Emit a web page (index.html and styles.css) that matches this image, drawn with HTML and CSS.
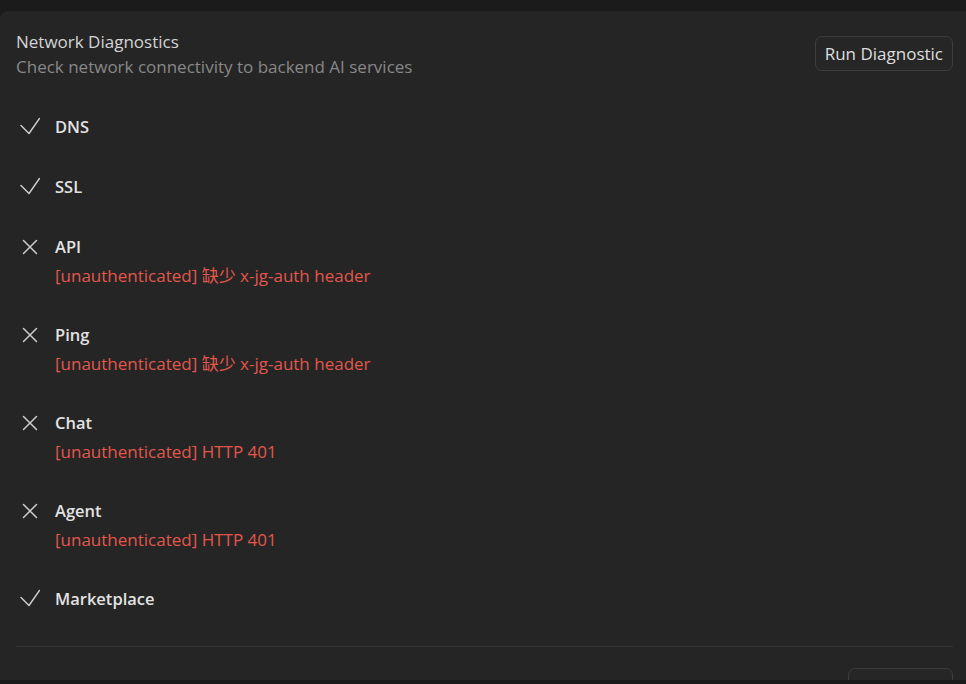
FILE: index.html
```html
<!DOCTYPE html>
<html lang="en">
<head>
<meta charset="utf-8">
<title>Network Diagnostics</title>
<link rel="stylesheet" href="styles.css">
</head>
<body>
<div class="panel">
  <header class="head">
    <div class="titles">
      <div class="title">Network Diagnostics</div>
      <div class="subtitle">Check network connectivity to backend AI services</div>
    </div>
    <button class="btn">Run Diagnostic</button>
  </header>
  <ul class="checks">
    <li class="check">
      <svg class="ico" viewBox="0 0 20 20"><path d="M1 8.5 L9 16.5 L19.5 1.5"/></svg>
      <div class="body"><div class="name">DNS</div></div>
    </li>
    <li class="check">
      <svg class="ico" viewBox="0 0 20 20"><path d="M1 8.5 L9 16.5 L19.5 1.5"/></svg>
      <div class="body"><div class="name">SSL</div></div>
    </li>
    <li class="check">
      <svg class="ico" viewBox="0 0 20 20"><path d="M3.5 3.5 L16.5 16.5 M16.5 3.5 L3.5 16.5"/></svg>
      <div class="body"><div class="name">API</div><div class="err">[unauthenticated] 缺少 x-jg-auth header</div></div>
    </li>
    <li class="check">
      <svg class="ico" viewBox="0 0 20 20"><path d="M3.5 3.5 L16.5 16.5 M16.5 3.5 L3.5 16.5"/></svg>
      <div class="body"><div class="name">Ping</div><div class="err">[unauthenticated] 缺少 x-jg-auth header</div></div>
    </li>
    <li class="check">
      <svg class="ico" viewBox="0 0 20 20"><path d="M3.5 3.5 L16.5 16.5 M16.5 3.5 L3.5 16.5"/></svg>
      <div class="body"><div class="name">Chat</div><div class="err">[unauthenticated] HTTP 401</div></div>
    </li>
    <li class="check">
      <svg class="ico" viewBox="0 0 20 20"><path d="M3.5 3.5 L16.5 16.5 M16.5 3.5 L3.5 16.5"/></svg>
      <div class="body"><div class="name">Agent</div><div class="err">[unauthenticated] HTTP 401</div></div>
    </li>
    <li class="check">
      <svg class="ico" viewBox="0 0 20 20"><path d="M1 8.5 L9 16.5 L19.5 1.5"/></svg>
      <div class="body"><div class="name">Marketplace</div></div>
    </li>
  </ul>
  <hr class="sep">
  <footer class="foot">
    <button class="btn">Copy Report</button>
  </footer>
</div>
<div class="strip"></div>
</body>
</html>
```

FILE: styles.css
```css
html, body {
  margin: 0;
  padding: 0;
  height: 684px;
  overflow: hidden;
  background: #1b1b1b;
}
body {
  font-family: "Segoe UI", "Open Sans", "Noto Sans CJK SC", sans-serif;
  font-size: 17px;
  color: #d6d6d6;
  padding-top: 11px;
  box-sizing: border-box;
}
.panel {
  background: #252525;
  height: 669px;
  border-radius: 8px 0 0 0;
  overflow: hidden;
  padding: 19px 13px 0 16px;
  box-sizing: border-box;
}
.strip {
  height: 4px;
  background: #1b1b1b;
}
.head {
  display: flex;
  justify-content: space-between;
  align-items: flex-start;
}
.title {
  line-height: 24px;
  color: #d4d4d4;
}
.subtitle {
  line-height: 26px;
  color: #888888;
}
.btn {
  font: inherit;
  color: #dedede;
  background: #262626;
  border: 1px solid #3d3d3d;
  border-radius: 7px;
  height: 35px;
  padding: 0 9px;
  margin-top: 6px;
  cursor: pointer;
}
.checks {
  list-style: none;
  margin: 35px 0 0;
  padding: 0;
  display: flex;
  flex-direction: column;
  gap: 36px;
}
.check {
  display: flex;
  gap: 15px;
  align-items: flex-start;
}
.ico {
  width: 20px;
  height: 20px;
  margin: 2px 0 0 4px;
  flex: none;
  fill: none;
  stroke: #cccccc;
  stroke-width: 1.5;
  stroke-linecap: round;
  stroke-linejoin: round;
}
.name {
  font-size: 16.5px;
  font-weight: 600;
  line-height: 24px;
  color: #e2e2e2;
}
.err {
  margin-top: 5px;
  line-height: 23px;
  height: 23px;
  color: #e2574c;
}
.sep {
  border: 0;
  border-top: 1px solid #343434;
  margin: 35px 0 0;
}
.foot {
  display: flex;
  justify-content: flex-end;
  padding-top: 21px;
}
.foot .btn {
  width: 105px;
  margin-top: 0;
  padding-top: 9px;
}
```
